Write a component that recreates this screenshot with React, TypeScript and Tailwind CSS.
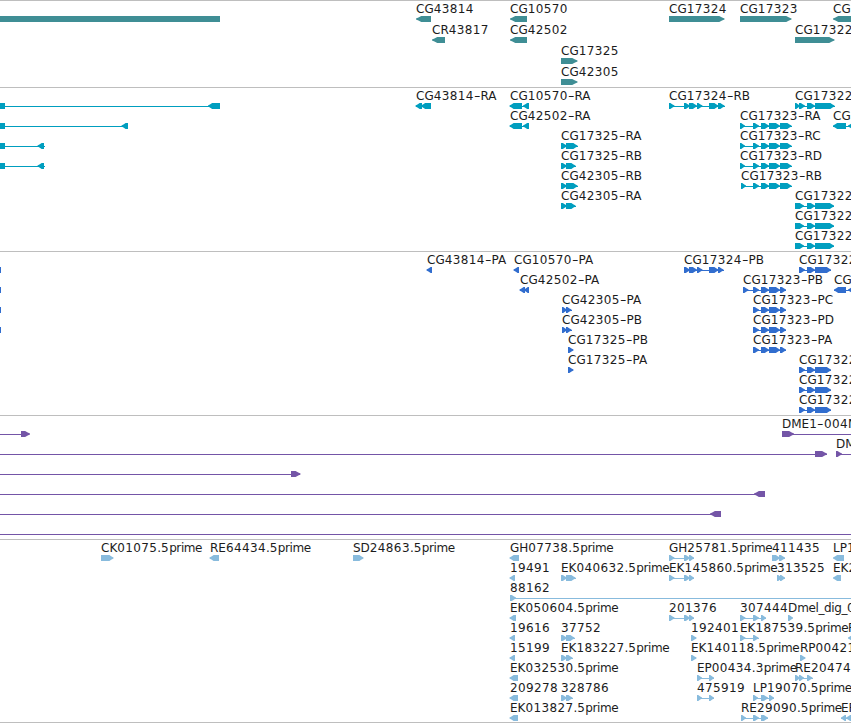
type Direction = "left" | "right" | "none";

interface Feature {
  label?: string;
  x: number;
  direction: Direction;
  blocks: number[][];
  line?: number[];
}

interface Track {
  name: string;
  className: string;
  rowClassName: string;
  tip: number;
  rows: Feature[][];
}

const right = (label: string, x: number, blocks: number[][], line?: number[]): Feature => ({
  label,
  x,
  direction: "right",
  blocks,
  line,
});

const left = (label: string, x: number, blocks: number[][], line?: number[]): Feature => ({
  label,
  x,
  direction: "left",
  blocks,
  line,
});

// exon layouts shared by several transcripts
const rna17322 = [[795, 804], [807, 815], [815, 834]];
const rna17323 = [[740, 745], [753, 759], [761, 769], [769, 780], [780, 791.5]];
const cds17322 = [[799, 805], [807, 815], [815, 831]];
const cds17323 = [[753, 759], [761, 769], [769, 780], [780, 786]];
const est17324 = [[669, 674.5], [684, 690], [689, 694]];
const est17324b = [[697, 702], [709, 714]];

const tracks: Track[] = [
  {
    name: "genes",
    className: "pb-px text-[#3f8e95]",
    rowClassName: "h-[21px]",
    tip: 7,
    rows: [
      [
        { x: 0, direction: "none", blocks: [[0, 220]] },
        left("CG43814", 416, [[416, 431]]),
        left("CG10570", 510, [[510, 527]]),
        right("CG17324", 669, [[669, 724.5]]),
        right("CG17323", 740, [[740, 791.5]]),
        left("CG", 833, [[833, 865]]),
      ],
      [
        left("CR43817", 432, [[432, 445]]),
        left("CG42502", 510, [[510, 527]]),
        right("CG17322", 795, [[795, 834.5]]),
      ],
      [right("CG17325", 561, [[561, 577.5]])],
      [right("CG42305", 561, [[561, 577.5]])],
    ],
  },
  {
    name: "transcripts",
    className: "pb-[2px] text-[#009ebf]",
    rowClassName: "h-5",
    tip: 5.5,
    rows: [
      [
        { x: 0, direction: "none", blocks: [[0, 5]] },
        left("", 0, [[208, 220]], [0, 215]),
        left("CG43814-RA", 416, [[415.5, 422], [421, 431]]),
        left("CG10570-RA", 510, [[509.5, 522], [523, 529]]),
        right("CG17324-RB", 669, [[669, 674.5], [684, 690], [689, 697], [697, 702.5], [709, 718.5], [718, 724.5]]),
        right("CG17322", 795, [[795, 800], [799, 805], [807, 815], [815, 834.5]]),
      ],
      [
        { x: 0, direction: "none", blocks: [[0, 5]] },
        left("", 0, [[121.5, 128]], [0, 128]),
        left("CG42502-RA", 510, [[509.5, 522], [523, 529]]),
        right("CG17323-RA", 740, rna17323),
        left("CG", 833, [[833, 846], [848, 857]]),
      ],
      [
        { x: 0, direction: "none", blocks: [[0, 5]] },
        left("", 0, [[37.5, 44]], [0, 45]),
        right("CG17325-RA", 561, [[561, 567], [566, 577.5]]),
        right("CG17323-RC", 740, rna17323),
      ],
      [
        { x: 0, direction: "none", blocks: [[0, 5]] },
        left("", 0, [[37.5, 44]], [0, 45]),
        right("CG17325-RB", 561, [[561, 567], [566, 575.5]]),
        right("CG17323-RD", 740, rna17323),
      ],
      [
        right("CG42305-RB", 561, [[561, 567], [566, 577.5]]),
        right("CG17323-RB", 741, [[741, 746], ...rna17323.slice(1)]),
      ],
      [right("CG42305-RA", 561, [[561, 567], [566, 575.5]]), right("CG17322", 795, rna17322)],
      [right("CG17322", 795, rna17322)],
      [right("CG17322", 795, rna17322)],
    ],
  },
  {
    name: "proteins",
    className: "pb-[2px] text-[#316dce]",
    rowClassName: "h-5",
    tip: 5.5,
    rows: [
      [
        { x: 0, direction: "none", blocks: [[0, 1]] },
        left("CG43814-PA", 427, [[426.5, 432]]),
        left("CG10570-PA", 514, [[513.5, 519]]),
        right("CG17324-PB", 684, [[684, 690], [689, 697], [697, 702.5], [709, 718.5], [718, 723.5]]),
        right("CG17322", 799, cds17322),
      ],
      [
        { x: 0, direction: "none", blocks: [[0, 1]] },
        left("CG42502-PA", 520, [[519.5, 525], [524, 529]]),
        right("CG17323-PB", 743, [[743, 748.5], ...cds17323]),
        left("CG", 834, [[834, 846], [848, 857]]),
      ],
      [
        { x: 0, direction: "none", blocks: [[0, 1]] },
        right("CG42305-PA", 562, [[562, 567], [566, 571.5]]),
        right("CG17323-PC", 753, cds17323),
      ],
      [
        { x: 0, direction: "none", blocks: [[0, 1]] },
        right("CG42305-PB", 562, [[562, 567], [566, 571.5]]),
        right("CG17323-PD", 753, cds17323),
      ],
      [right("CG17325-PB", 568, [[568, 573.5]]), right("CG17323-PA", 753, cds17323)],
      [right("CG17325-PA", 568, [[568, 573.5]]), right("CG17322", 799, cds17322)],
      [right("CG17322", 799, cds17322)],
      [right("CG17322", 799, cds17322)],
    ],
  },
  {
    name: "clones",
    className: "pb-[2px] text-[#7455a7]",
    rowClassName: "h-5",
    tip: 6.5,
    rows: [
      [right("", 0, [[21, 30]], [0, 29]), right("DME1-004N", 782, [[782, 794]], [782, 851])],
      [right("", 0, [[815, 827]], [0, 827]), right("DM", 836, [[836, 842]], [836, 851])],
      [right("", 0, [[291, 300.5]], [0, 300])],
      [left("", 0, [[754, 765]], [0, 765])],
      [left("", 0, [[710, 721]], [0, 721])],
      [{ x: 0, direction: "none", blocks: [], line: [0, 851] }],
    ],
  },
  {
    name: "ests",
    className: "border-b pb-px text-[#88bbdd]",
    rowClassName: "h-5",
    tip: 5.5,
    rows: [
      [
        right("CK01075.5prime", 101, [[101, 113.5]]),
        left("RE64434.5prime", 210, [[209.5, 219]]),
        right("SD24863.5prime", 353, [[353, 363.5]]),
        left("GH07738.5prime", 510, [[509.5, 519]]),
        right("GH25781.5prime", 669, est17324),
        right("411435", 772, [[772, 780], [779, 785]]),
        left("LP1", 833, [[833, 844]]),
      ],
      [
        left("19491", 510, [[509.5, 515]]),
        right("EK040632.5prime", 561, [[561, 567], [566, 575.5]]),
        right("EK145860.5prime", 669, est17324),
        right("313525", 777, [[777, 782], [780, 785]]),
        left("EK2", 833, [[833, 841]]),
      ],
      [right("88162", 510, [[510, 516]], [510, 851])],
      [
        left("EK050604.5prime", 510, [[509.5, 516]]),
        right("201376", 669, est17324),
        right("307444", 740, [[740, 745.5], [753, 759], [761, 766]]),
        right("Dmel_dig_0", 788, [[788, 793]]),
      ],
      [
        left("19616", 510, [[509.5, 515]]),
        right("37752", 561, [[561, 567], [566, 574.5]]),
        right("192401", 691, [[691, 696.5]]),
        right("EK187539.5prime", 740, [[740, 745.5], [753, 758.5]]),
        left("R", 848, [[848, 855]]),
      ],
      [
        left("15199", 510, [[509.5, 515]]),
        right("EK183227.5prime", 561, [[561, 567], [566, 572.5]]),
        right("EK140118.5prime", 691, [[691, 696.5]]),
        right("RP00421", 800, [[800, 805.5]]),
      ],
      [
        left("EK032530.5prime", 510, [[509.5, 518]]),
        right("EP00434.3prime", 697, est17324b),
        right("RE20474", 795, [[795, 800], [799, 804], [807, 812.5]]),
      ],
      [
        left("209278", 510, [[509.5, 518]]),
        right("328786", 561, [[561, 567], [566, 572.5]]),
        right("475919", 697, est17324b),
        right("LP19070.5prime", 753, [[753, 758], [761, 768], [769, 774]]),
      ],
      [
        left("EK013827.5prime", 510, [[509.5, 518]]),
        right("RE29090.5prime", 741, [[741, 746], [753, 759], [761, 768]]),
        left("EF", 841, [[841, 846], [846, 857]]),
      ],
    ],
  },
];

function blockPoints([start, end]: number[], direction: Direction, tip: number) {
  if (direction === "none") {
    return `${start},0 ${end},0 ${end},6 ${start},6`;
  }
  const size = Math.min(tip, end - start);
  const back = direction === "right" ? start : end;
  const front = direction === "right" ? end : start;
  const sign = direction === "right" ? 1 : -1;
  const neck = front - sign * size * 0.75;
  const shoulder = front - sign * size * 0.35;
  return `${back},0 ${neck},0 ${shoulder},1.4 ${front},2.6 ${front},3.6 ${shoulder},4.6 ${neck},6 ${back},6`;
}

function Glyph({ feature, tip }: { feature: Feature; tip: number }) {
  const { blocks, direction } = feature;
  let line = feature.line;
  if (!line && blocks.length > 1) {
    line = [blocks[0][0], blocks[blocks.length - 1][1]];
  }
  return (
    <g>
      {line && <rect x={line[0]} y={3} width={line[1] - line[0]} height={1} shapeRendering="crispEdges" />}
      {blocks.map((block, i) => (
        <polygon key={i} points={blockPoints(block, direction, tip)} />
      ))}
    </g>
  );
}

// digits are set a little wider than letters
function Label({ text, x }: { text: string; x: number }) {
  return (
    <span className="absolute top-0 whitespace-pre" style={{ left: x }}>
      {text.split(/(\d+|-|[a-z_]+)/).map((part, i) => {
        if (part === "-") {
          return (
            <span key={i} className="inline-block w-[6.8px] origin-left scale-x-150">
              -
            </span>
          );
        }
        if (/[a-z]/.test(part)) {
          return (
            <span key={i} className="tracking-[-0.4px]">
              {part}
            </span>
          );
        }
        return (
          <span key={i} className={/\d/.test(part) ? "tracking-[0.37px]" : ""}>
            {part}
          </span>
        );
      })}
    </span>
  );
}

function TrackPanel({ track }: { track: Track }) {
  return (
    <section className={`border-t border-[#bebebe] pt-px ${track.className}`}>
      {track.rows.map((row, i) => (
        <div key={i} className={`overflow-hidden ${track.rowClassName}`}>
          <div className="relative h-[14px] text-[#1c1c1c]">
            {row.map((feature, j) => feature.label && <Label key={j} text={feature.label} x={feature.x} />)}
          </div>
          <svg className="block fill-current" width={851} height={6} viewBox="0 0 851 6">
            {row.map((feature, j) => (
              <Glyph key={j} feature={feature} tip={track.tip} />
            ))}
          </svg>
        </div>
      ))}
    </section>
  );
}

export default function App() {
  return (
    <main className="h-[723px] w-[851px] overflow-hidden bg-white font-['DejaVu_Sans',sans-serif] text-[12px] leading-[14px]">
      {tracks.map((track) => (
        <TrackPanel key={track.name} track={track} />
      ))}
    </main>
  );
}
